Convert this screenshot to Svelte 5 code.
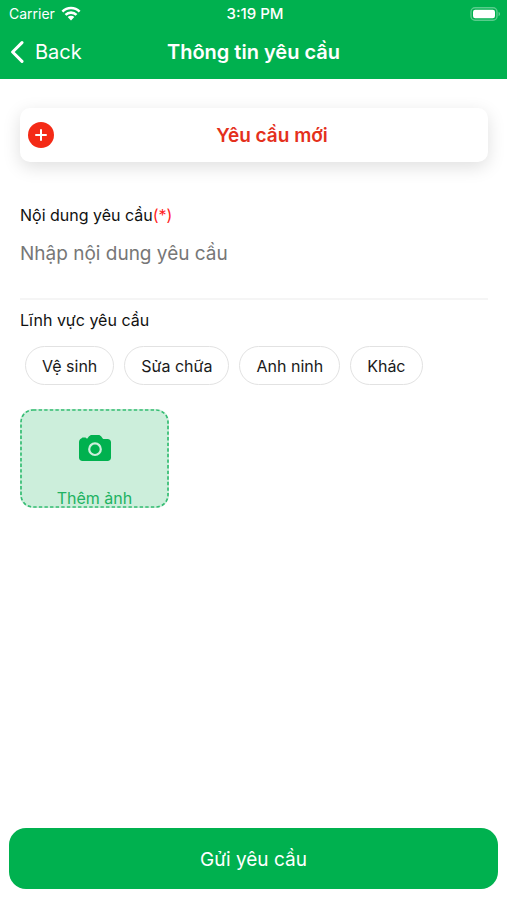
<script>
  const topics = ['Vệ sinh', 'Sửa chữa', 'Anh ninh', 'Khác'];
  let selected = $state('');
  let content = $state('');
</script>

<div class="screen">
  <header>
    <div class="status">
      <div class="carrier">
        <span>Carrier</span>
        <svg width="20" height="15" viewBox="0 0 20 15" aria-hidden="true">
          <g fill="none" stroke="#fff" stroke-width="2.6">
            <path d="M1.4 5.6a12.2 12.2 0 0 1 17.2 0" />
            <path d="M4.5 8.9a7.8 7.8 0 0 1 11 0" />
          </g>
          <path d="M6.7 11.1a4.7 4.7 0 0 1 6.6 0L10 14.4z" fill="#fff" />
        </svg>
      </div>
      <time>3:19 PM</time>
      <svg class="battery" width="31" height="14" viewBox="0 0 31 14" aria-hidden="true">
        <rect x="1" y="0.8" width="26" height="12.4" rx="4" fill="none" stroke="#fff" stroke-opacity=".35" stroke-width="1.4" />
        <rect x="3" y="2.8" width="22" height="8.4" rx="2.2" fill="#fff" />
        <path d="M28.6 4.8c1.8.7 1.8 3.7 0 4.4z" fill="#fff" fill-opacity=".45" />
      </svg>
    </div>
    <nav>
      <button class="back" type="button">
        <svg width="14" height="24" viewBox="0 0 14 24" aria-hidden="true">
          <path d="M12 2.6L2.6 12l9.4 9.4" fill="none" stroke="#fff" stroke-width="3" stroke-linecap="round" stroke-linejoin="round" />
        </svg>
        <span>Back</span>
      </button>
      <h1>Thông tin yêu cầu</h1>
    </nav>
  </header>

  <main>
    <button class="new" type="button">
      <svg width="26" height="26" viewBox="0 0 26 26" aria-hidden="true">
        <circle cx="13" cy="13" r="13" fill="#f42a16" />
        <path d="M8 13h10M13 8v10" stroke="#fff" stroke-width="2" stroke-linecap="round" />
      </svg>
      <span>Yêu cầu mới</span>
    </button>

    <label for="content">Nội dung yêu cầu<span class="required">(*)</span></label>
    <textarea id="content" placeholder="Nhập nội dung yêu cầu" bind:value={content}></textarea>

    <h2 id="topics">Lĩnh vực yêu cầu</h2>
    <div class="chips" role="group" aria-labelledby="topics">
      {#each topics as topic}
        <button type="button" aria-pressed={selected === topic} onclick={() => (selected = topic)}>{topic}</button>
      {/each}
    </div>

    <button class="photo" type="button">
      <svg class="outline" aria-hidden="true">
        <rect x="1" y="1" rx="12" fill="none" stroke="#35bd73" stroke-width="1.7" stroke-dasharray="3.4 2.2" />
      </svg>
      <svg width="32" height="26" viewBox="0 0 32 26" aria-hidden="true">
        <path d="M2.4 3.5C2.7 2.7 3.3 2.4 4.2 2.4h1.6c.9 0 1.4.3 1.7 1h.9l1.4-1.8C10.7.5 11.5 0 12.800 0h6.600c1.300 0 2.100.5 2.900 1.600l1.400 1.800c.4.4.8.6 1.500.6h3.200C30.800 4 32 5.300 32 7.500v15c0 2.200-1.300 3.500-3.600 3.500H3.600C1.300 26 0 24.700 0 22.500v-15c0-2 .8-3.500 2.400-4z" fill="#00b14f" />
        <circle cx="16" cy="14.2" r="5.8" fill="none" stroke="#cceedb" stroke-width="2.2" />
      </svg>
      <span>Thêm ảnh</span>
    </button>
  </main>

  <footer>
    <button type="button">Gửi yêu cầu</button>
  </footer>
</div>

<style>
  .screen {
    min-height: 100vh;
    display: flex;
    flex-direction: column;
    background: #fff;
    color: #1a1a1a;
    font-family: Inter, "Noto Sans", sans-serif;
    font-size: 16px;
    line-height: 24px;
  }
  button {
    margin: 0;
    padding: 0;
    border: 0;
    background: none;
    font: inherit;
    color: inherit;
    cursor: pointer;
  }
  svg {
    display: block;
    flex: none;
  }
  header {
    background: #00b14f;
    color: #fff;
    padding-bottom: 2px;
  }
  .status {
    display: grid;
    grid-template-columns: 1fr auto 1fr;
    align-items: center;
    height: 27px;
    padding: 0 6px 0 9px;
    font-size: 14px;
  }
  .carrier {
    display: flex;
    align-items: center;
    gap: 6px;
  }
  time {
    font-size: 15px;
    font-weight: 500;
  }
  .battery {
    justify-self: end;
  }
  nav {
    display: grid;
    grid-template-columns: 1fr auto 1fr;
    align-items: center;
    height: 50px;
    padding: 0 10px;
  }
  .back {
    display: flex;
    align-items: center;
    justify-self: start;
    gap: 11px;
    font-size: 20px;
  }
  h1 {
    margin: 0;
    font-size: 20px;
    font-weight: 600;
  }
  main {
    flex: 1;
    padding: 29px 19px 20px 20px;
  }
  .new {
    display: grid;
    grid-template-columns: 26px 1fr;
    align-items: center;
    gap: 10px;
    width: 100%;
    height: 54px;
    padding: 0 8px;
    border-radius: 10px;
    background: #fff;
    box-shadow: 0 5px 18px rgba(0, 0, 0, 0.13);
    color: #e4301c;
    font-size: 19px;
    font-weight: 600;
  }
  .new span {
    padding-top: 2px;
  }
  label {
    display: block;
    margin-top: 41px;
    color: #111;
  }
  .required {
    color: #ff1d1d;
  }
  textarea {
    display: block;
    box-sizing: border-box;
    width: 100%;
    height: 73px;
    margin: 0;
    padding: 15px 0;
    border: 0;
    border-bottom: 2px solid #f5f5f5;
    outline: 0;
    resize: none;
    background: none;
    color: inherit;
    font: inherit;
    font-size: 19px;
  }
  textarea::placeholder {
    color: #777;
    opacity: 1;
  }
  h2 {
    margin: 8px 0 14px;
    color: #111;
    font-size: 16px;
    font-weight: 400;
  }
  .chips {
    display: flex;
    flex-wrap: wrap;
    gap: 10px;
    padding: 0 5px;
  }
  .chips button {
    height: 39px;
    padding: 0 16px;
    border: 1px solid #e2e2e2;
    border-radius: 20px;
  }
  .chips button[aria-pressed="true"] {
    border-color: #00b14f;
    color: #00b14f;
  }
  .photo {
    position: relative;
    display: flex;
    flex-direction: column;
    align-items: center;
    gap: 25px;
    box-sizing: border-box;
    width: 149px;
    height: 99px;
    margin-top: 24px;
    padding-top: 26px;
    overflow: hidden;
    border-radius: 13px;
    background: #cceedb;
    color: #20b261;
  }
  .outline {
    position: absolute;
    inset: 0;
    width: 100%;
    height: 100%;
  }
  .outline rect {
    width: calc(100% - 2px);
    height: calc(100% - 2px);
  }
  footer {
    padding: 0 9px 11px;
  }
  footer button {
    width: 100%;
    height: 61px;
    padding-top: 2px;
    border-radius: 17px;
    background: #00b14f;
    color: #fff;
    font-size: 19px;
  }
</style>
